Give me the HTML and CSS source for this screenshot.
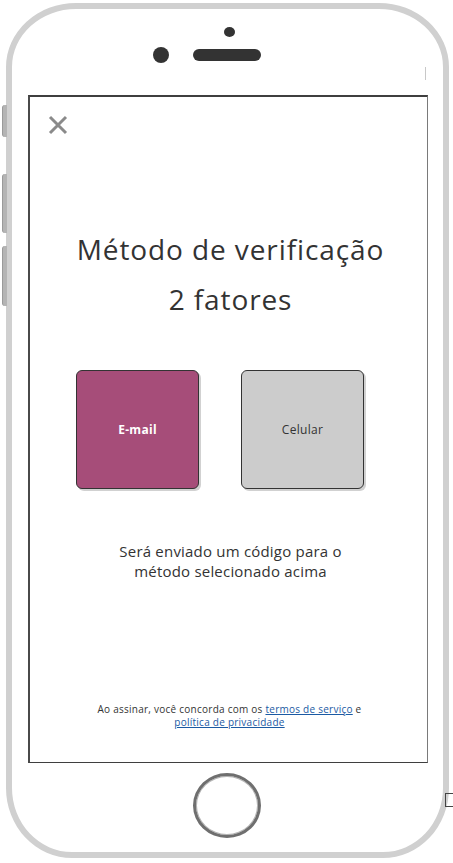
FILE: index.html
```html
<!DOCTYPE html>
<html lang="pt-BR">
<head>
<meta charset="utf-8">
<title>Método de verificação 2 fatores</title>
<link rel="stylesheet" href="styles.css">
</head>
<body>
<div class="page">
  <span class="side-btn side-btn-1"></span>
  <span class="side-btn side-btn-2"></span>
  <span class="side-btn side-btn-3"></span>
  <div class="phone">
    <div class="phone-top">
      <span class="sensor"></span>
      <div class="cam-row">
        <span class="camera"></span>
        <span class="speaker"></span>
      </div>
      <span class="tick"></span>
    </div>
    <div class="screen">
      <button class="close" aria-label="Fechar">
        <svg width="20" height="20" viewBox="0 0 20 20"><path d="M2 2 L18 18 M18 2 L2 18" stroke="#8a8a8a" stroke-width="3" fill="none"/></svg>
      </button>
      <h1 class="title">Método de verificação<br>2 fatores</h1>
      <div class="options">
        <div class="option option-email">E-mail</div>
        <div class="option option-phone">Celular</div>
      </div>
      <p class="desc">Será enviado um código para o<br>método selecionado acima</p>
      <p class="legal">Ao assinar, você concorda com os <a href="#">termos de serviço</a> e<br><a href="#">política de privacidade</a></p>
    </div>
    <div class="phone-bottom">
      <span class="home"></span>
    </div>
  </div>
  <span class="bracket"></span>
</div>
</body>
</html>
```
FILE: styles.css
```css
* { box-sizing: border-box; }
html, body { margin: 0; padding: 0; background: #fff; }
body { font-family: "Open Sans", "Liberation Sans", sans-serif; color: #333; }

.page {
  position: relative;
  width: 453px;
  height: 863px;
  overflow: hidden;
  padding: 3px 0 0 6px;
}

.phone {
  width: 443px;
  height: 855px;
  border: 6px solid #d0d0d0;
  border-radius: 70px 70px 66px 66px / 64px 64px 70px 70px;
  display: flex;
  flex-direction: column;
}

.side-btn {
  position: absolute;
  left: 2px;
  width: 5px;
  background: #b4b4b4;
  border-left: 1px solid #9a9a9a;
  border-radius: 3px 0 0 3px;
}
.side-btn-1 { top: 105px; height: 32px; }
.side-btn-2 { top: 174px; height: 59px; }
.side-btn-3 { top: 246px; height: 60px; }

.phone-top {
  position: relative;
  height: 86px;
  display: flex;
  flex-direction: column;
  align-items: center;
}
.sensor {
  width: 11px;
  height: 10px;
  margin: 18px 0 0 3px;
  border-radius: 50%;
  background: #333;
}
.cam-row {
  display: flex;
  align-items: center;
  gap: 24px;
  margin: 10px 0 0 -41px;
}
.camera {
  width: 16px;
  height: 16px;
  border-radius: 50%;
  background: #333;
}
.speaker {
  width: 68px;
  height: 12px;
  border-radius: 6px;
  background: #333;
}
.tick {
  position: absolute;
  right: 17px;
  top: 58px;
  width: 1px;
  height: 13px;
  background: #c8c8c8;
}

.screen {
  width: 400px;
  height: 668px;
  margin-left: 16px;
  border-top: 2px solid #3f3f3f;
  border-left: 2px solid #4a4a4a;
  border-right: 1px solid #7a7a7a;
  border-bottom: 1.5px solid #3f3f3f;
  display: flex;
  flex-direction: column;
  padding: 18px 0 33px 0;
}

.close {
  width: 20px;
  height: 20px;
  margin-left: 18px;
  padding: 0;
  border: 0;
  background: none;
  display: block;
}
.close svg { display: block; }

.title {
  margin: 89px 0 0 4px;
  font-size: 28px;
  font-weight: 500;
  line-height: 50px;
  letter-spacing: 0.9px;
  text-align: center;
  color: #333;
}

.options {
  display: flex;
  gap: 42px;
  margin: 46px 0 0 46px;
}
.option {
  width: 123px;
  height: 119px;
  border: 1.5px solid #333;
  border-radius: 6px;
  box-shadow: 2px 2px 0 rgba(0, 0, 0, 0.18);
  display: flex;
  align-items: center;
  justify-content: center;
  font-size: 12px;
  letter-spacing: 0.3px;
}
.option-email {
  background: #a64d79;
  color: #fff;
  font-weight: 700;
}
.option-phone {
  background: #cccccc;
  color: #333;
}

.desc {
  margin: 52px 0 0 4px;
  font-size: 15px;
  line-height: 20px;
  letter-spacing: 0.2px;
  text-align: center;
  color: #333;
}

.legal {
  margin: auto 0 0 2px;
  font-size: 10px;
  line-height: 13px;
  letter-spacing: 0.25px;
  text-align: center;
  color: #333;
}
.legal a { color: #1b5aa3; text-decoration: underline; }

.phone-bottom {
  flex: 1;
  display: flex;
  justify-content: center;
}
.home {
  width: 68px;
  height: 65px;
  margin: 10px 0 0 -1px;
  border-radius: 50%;
  border: 3px solid #6f6f6f;
  box-shadow: inset 0 0 0 1px #b5b5b5;
}

.bracket {
  position: absolute;
  left: 445px;
  top: 793px;
  width: 10px;
  height: 14px;
  border: 1.5px solid #444;
  border-right: 0;
}
```
